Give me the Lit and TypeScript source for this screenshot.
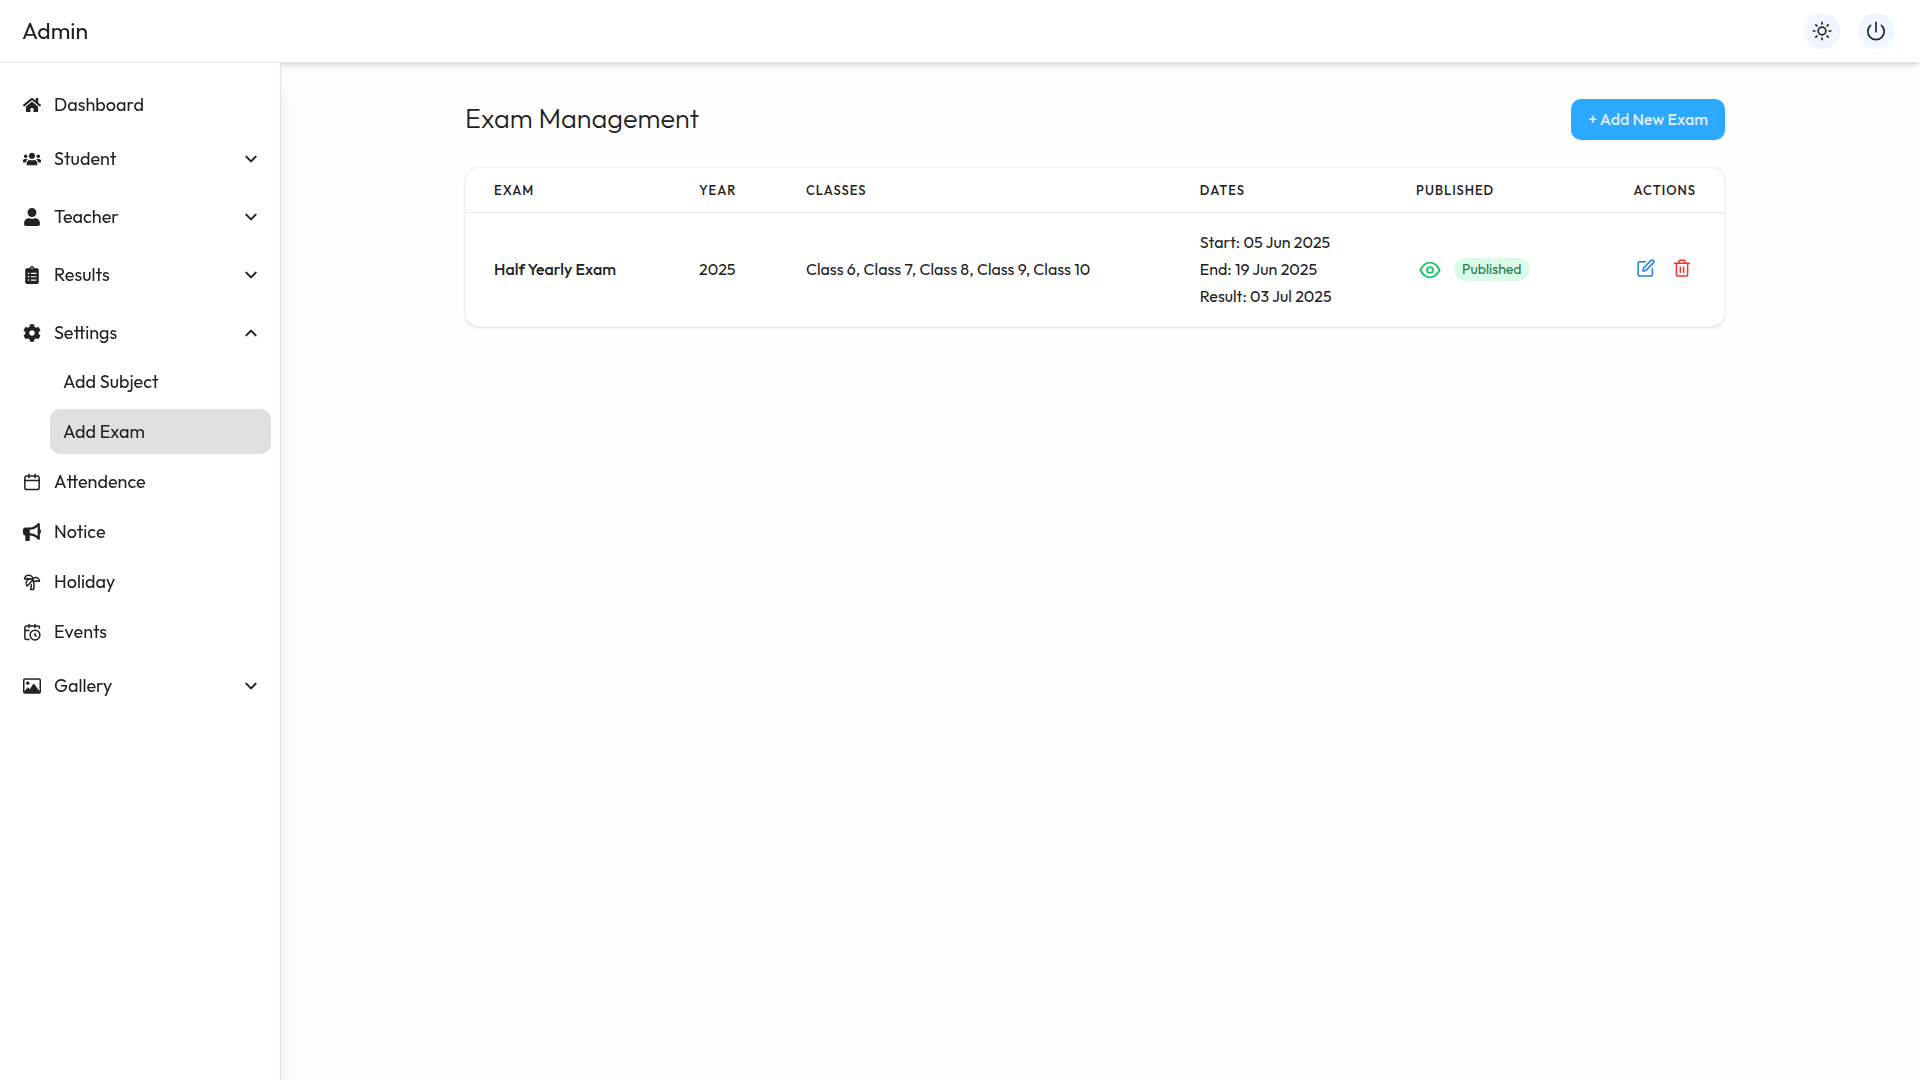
import { LitElement, html, css, svg, nothing } from "lit";
import { customElement, property, state } from "lit/decorators.js";

const icons: Record<string, unknown> = {
  home: svg`<svg viewBox="0 0 576 512" fill="currentColor"><path d="M280.37 148.26L96 300.11V464a16 16 0 0 0 16 16l112.06-.29a16 16 0 0 0 15.92-16V368a16 16 0 0 1 16-16h64a16 16 0 0 1 16 16v95.64a16 16 0 0 0 16 16.05L464 480a16 16 0 0 0 16-16V300L295.67 148.26a12.19 12.19 0 0 0-15.3 0zM571.6 251.47L488 182.56V44.05a12 12 0 0 0-12-12h-56a12 12 0 0 0-12 12v72.61L318.47 43a48 48 0 0 0-61 0L4.34 251.47a12 12 0 0 0-1.6 16.9l25.5 31A12 12 0 0 0 45.15 301l235.22-193.74a12.19 12.19 0 0 1 15.3 0L530.9 301a12 12 0 0 0 16.9-1.6l25.5-31a12 12 0 0 0-1.7-16.93z"/></svg>`,
  users: svg`<svg viewBox="0 0 640 512" fill="currentColor"><path d="M96 224c35.3 0 64-28.7 64-64s-28.7-64-64-64-64 28.7-64 64 28.7 64 64 64zm448 0c35.3 0 64-28.7 64-64s-28.7-64-64-64-64 28.7-64 64 28.7 64 64 64zm32 32h-64c-17.6 0-33.5 7.1-45.1 18.6 40.3 22.1 68.9 62 75.1 109.4h66c17.7 0 32-14.3 32-32v-32c0-35.3-28.7-64-64-64zm-256 0c61.9 0 112-50.1 112-112S381.9 32 320 32 208 82.1 208 144s50.1 112 112 112zm76.8 32h-8.3c-20.8 10-43.9 16-68.5 16s-47.6-6-68.5-16h-8.3C179.6 288 128 339.6 128 403.2V432c0 26.5 21.5 48 48 48h288c26.5 0 48-21.5 48-48v-28.8c0-63.6-51.6-115.2-115.2-115.2zm-223.7-13.4C161.5 263.1 145.6 256 128 256H64c-35.3 0-64 28.7-64 64v32c0 17.7 14.3 32 32 32h65.9c6.3-47.4 34.9-87.3 75.2-109.4z"/></svg>`,
  user: svg`<svg viewBox="0 0 448 512" fill="currentColor"><path d="M224 256c70.7 0 128-57.3 128-128S294.7 0 224 0 96 57.3 96 128s57.3 128 128 128zm89.6 32h-16.7c-22.2 10.2-46.9 16-72.9 16s-50.6-5.8-72.9-16h-16.7C60.2 288 0 348.2 0 422.4V464c0 26.5 21.5 48 48 48h352c26.5 0 48-21.5 48-48v-41.6c0-74.2-60.2-134.4-134.4-134.4z"/></svg>`,
  clipboard: svg`<svg viewBox="0 0 384 512" fill="currentColor"><path d="M336 64h-80c0-35.3-28.7-64-64-64s-64 28.7-64 64H48C21.5 64 0 85.5 0 112v352c0 26.5 21.5 48 48 48h288c26.5 0 48-21.5 48-48V112c0-26.5-21.5-48-48-48zM96 424c-13.3 0-24-10.7-24-24s10.7-24 24-24 24 10.7 24 24-10.7 24-24 24zm0-96c-13.3 0-24-10.7-24-24s10.7-24 24-24 24 10.7 24 24-10.7 24-24 24zm0-96c-13.3 0-24-10.7-24-24s10.7-24 24-24 24 10.7 24 24-10.7 24-24 24zm96-192c13.3 0 24 10.7 24 24s-10.7 24-24 24-24-10.7-24-24 10.7-24 24-24zm128 368c0 4.4-3.6 8-8 8H168c-4.4 0-8-3.6-8-8v-16c0-4.4 3.6-8 8-8h144c4.4 0 8 3.6 8 8v16zm0-96c0 4.4-3.6 8-8 8H168c-4.4 0-8-3.6-8-8v-16c0-4.4 3.6-8 8-8h144c4.4 0 8 3.6 8 8v16zm0-96c0 4.4-3.6 8-8 8H168c-4.4 0-8-3.6-8-8v-16c0-4.4 3.6-8 8-8h144c4.4 0 8 3.6 8 8v16z"/></svg>`,
  cog: svg`<svg viewBox="0 0 512 512" fill="currentColor"><path d="M487.4 315.7l-42.6-24.6c4.3-23.2 4.3-47 0-70.2l42.6-24.6c4.9-2.8 7.1-8.6 5.5-14-11.1-35.6-30-67.8-54.7-94.6-3.8-4.1-10-5.1-14.8-2.3L380.8 110c-17.9-15.4-38.5-27.3-60.8-35.1V25.8c0-5.6-3.9-10.5-9.4-11.7-36.7-8.2-74.3-7.8-109.2 0-5.5 1.2-9.4 6.1-9.4 11.7V75c-22.2 7.9-42.8 19.8-60.8 35.1L88.7 85.5c-4.9-2.8-11-1.9-14.8 2.3-24.7 26.7-43.6 58.9-54.7 94.6-1.7 5.4.6 11.2 5.5 14L67.3 221c-4.3 23.2-4.3 47 0 70.2l-42.6 24.6c-4.9 2.8-7.1 8.6-5.5 14 11.1 35.6 30 67.8 54.7 94.6 3.8 4.1 10 5.1 14.8 2.3l42.6-24.6c17.9 15.4 38.5 27.3 60.8 35.1v49.2c0 5.6 3.9 10.5 9.4 11.7 36.7 8.2 74.3 7.8 109.2 0 5.5-1.2 9.4-6.1 9.4-11.7v-49.2c22.2-7.9 42.8-19.8 60.8-35.1l42.6 24.6c4.9 2.8 11 1.9 14.8-2.3 24.7-26.7 43.6-58.9 54.7-94.6 1.5-5.5-.7-11.3-5.6-14.1zM256 336c-44.1 0-80-35.9-80-80s35.9-80 80-80 80 35.9 80 80-35.9 80-80 80z"/></svg>`,
  calendar: svg`<svg viewBox="0 0 24 24" fill="none" stroke="currentColor" stroke-width="2" stroke-linecap="round" stroke-linejoin="round"><rect x="2.5" y="4" width="19" height="18" rx="2.5"/><path d="M2.5 10h19M8 1.8v4.4M16 1.8v4.4"/></svg>`,
  horn: svg`<svg viewBox="0 0 512 512" fill="currentColor"><path d="M480 32c0-12.9-7.8-24.6-19.8-29.6s-25.7-2.2-34.9 6.9L381.7 53c-48 48-113.1 75-181 75H64c-35.3 0-64 28.7-64 64v96c0 35.3 28.7 64 64 64v128c0 17.7 14.3 32 32 32h64c17.7 0 32-14.3 32-32V352h8.7c67.9 0 133 27 181 75l43.6 43.6c9.2 9.2 22.9 11.9 34.9 6.9s19.8-16.6 19.8-29.6V300.4c18.6-8.8 32-32.5 32-60.4s-13.4-51.6-32-60.4V32zm-64 76.7v262.6C357.2 317.8 280.5 288 200.7 288H192v-96h8.7c79.8 0 156.5-29.8 215.3-83.3z"/></svg>`,
  palm: svg`<svg viewBox="0 0 24 24" fill="none" stroke="currentColor" stroke-width="2" stroke-linecap="round" stroke-linejoin="round"><path d="M13 8c0-2.76-2.46-5-5.5-5S2 5.24 2 8h2l1-1 1 1h4"/><path d="M13 7.14A5.82 5.82 0 0 1 16.5 6c3.04 0 5.5 2.24 5.5 5h-3l-1-1-1 1h-3"/><path d="M5.89 9.71c-2.15 2.15-2.3 5.47-.35 7.43l4.24-4.25.7-.7.71-.71 2.12-2.12c-1.95-1.96-5.27-1.8-7.42.35"/><path d="M11 15.5c.5 2.5-.17 4.5-1 6.5h4c2-5.5-.5-12-1-14"/></svg>`,
  events: svg`<svg viewBox="0 0 24 24" fill="none" stroke="currentColor" stroke-width="2" stroke-linecap="round" stroke-linejoin="round"><path d="M22 7V6a2 2 0 0 0-2-2H4.5a2 2 0 0 0-2 2v14a2 2 0 0 0 2 2H8M16 2v4M8 2v4M2.5 10H8M17.5 17.5 16 16.3V14"/><circle cx="16" cy="16" r="6.5"/></svg>`,
  image: svg`<svg viewBox="0 0 576 512" fill="currentColor"><path fill-rule="evenodd" d="M64 8h448a64 64 0 0 1 64 64v368a64 64 0 0 1-64 64H64a64 64 0 0 1-64-64V72A64 64 0 0 1 64 8zm0 48a16 16 0 0 0-16 16v348l90-112a20 20 0 0 1 31 0l44 54 110-160a24 24 0 0 1 40 0l165 222V72a16 16 0 0 0-16-16z"/><circle cx="152" cy="164" r="54"/></svg>`,
  down: svg`<svg viewBox="0 0 24 24" fill="none" stroke="currentColor" stroke-width="3" stroke-linecap="round" stroke-linejoin="round"><path d="m5 8.5 7 7 7-7"/></svg>`,
  up: svg`<svg viewBox="0 0 24 24" fill="none" stroke="currentColor" stroke-width="3" stroke-linecap="round" stroke-linejoin="round"><path d="m5 15.5 7-7 7 7"/></svg>`,
  sun: svg`<svg viewBox="0 0 24 24" fill="none" stroke="currentColor" stroke-width="2" stroke-linecap="round"><circle cx="12" cy="12" r="4.6"/><path d="M12 1.5v2M12 20.5v2M1.5 12h2M20.5 12h2M4.6 4.6 6 6M18 18l1.4 1.4M4.6 19.4 6 18M18 6l1.4-1.4"/></svg>`,
  power: svg`<svg viewBox="0 0 24 24" fill="none" stroke="currentColor" stroke-width="2" stroke-linecap="round"><path d="M12 1.5V13M5.5 5.3a9.8 9.8 0 1 0 13 0"/></svg>`,
  eye: svg`<svg viewBox="0 0 24 24" fill="none" stroke="currentColor" stroke-width="2" stroke-linejoin="round"><path d="M1.5 12C4 7 7.5 4 12 4s8 3 10.5 8c-2.5 5-6 8-10.5 8S4 17 1.5 12z"/><circle cx="12" cy="12" r="3.2"/></svg>`,
  edit: svg`<svg viewBox="0 0 24 24" fill="none" stroke="currentColor" stroke-width="2" stroke-linecap="round" stroke-linejoin="round"><path d="M11 3.5H3.5a2 2 0 0 0-2 2v15a2 2 0 0 0 2 2h15a2 2 0 0 0 2-2V13"/><path d="M18.6 2.2a2.2 2.2 0 0 1 3.2 3.2L12 15.2 8 16l.8-4z"/></svg>`,
  trash: svg`<svg viewBox="0 0 24 24" fill="none" stroke="currentColor" stroke-width="2" stroke-linecap="round" stroke-linejoin="round"><path d="M2 5.5h20M4.5 5.5V21A1.5 1.5 0 0 0 6 22.5h12a1.5 1.5 0 0 0 1.5-1.5V5.5M8 5.5v-3a1 1 0 0 1 1-1h6a1 1 0 0 1 1 1v3M9.8 10.5v7M14.2 10.5v7"/></svg>`,
};

interface NavItem {
  label: string;
  icon: string;
  children?: string[];
  group?: boolean;
}

const nav: NavItem[] = [
  { label: "Dashboard", icon: "home" },
  { label: "Student", icon: "users", group: true },
  { label: "Teacher", icon: "user", group: true },
  { label: "Results", icon: "clipboard", group: true },
  { label: "Settings", icon: "cog", group: true, children: ["Add Subject", "Add Exam"] },
  { label: "Attendence", icon: "calendar" },
  { label: "Notice", icon: "horn" },
  { label: "Holiday", icon: "palm" },
  { label: "Events", icon: "events" },
  { label: "Gallery", icon: "image", group: true },
];

const exams = [
  {
    name: "Half Yearly Exam",
    year: 2025,
    classes: ["Class 6", "Class 7", "Class 8", "Class 9", "Class 10"],
    start: "05 Jun 2025",
    end: "19 Jun 2025",
    result: "03 Jul 2025",
  },
];

@customElement("admin-header")
class AdminHeader extends LitElement {
  static styles = css`
    :host { display: block; position: relative; z-index: 2; }
    .bar {
      display: flex; align-items: center; justify-content: space-between;
      height: 62px; padding: 0 26px 0 22px; background: #fff;
      border-bottom: 1px solid #dfe5ec;
      box-shadow: 0 4px 6px -1px rgba(0, 0, 0, 0.1), 0 2px 4px -2px rgba(0, 0, 0, 0.1);
    }
    .brand { font-size: 23px; line-height: 32px; will-change: transform; }
    .tools { display: flex; gap: 18px; }
    .tool {
      display: grid; place-items: center; width: 36px; height: 36px; padding: 0;
      border: 0; border-radius: 50%; background: #eff6ff; color: #222; cursor: pointer;
    }
    svg { display: block; width: 20px; height: 20px; }
  `;
  render() {
    return html`<header class="bar">
      <div class="brand">Admin</div>
      <div class="tools">
        <button class="tool" aria-label="Toggle theme">${icons.sun}</button>
        <button class="tool" aria-label="Log out">${icons.power}</button>
      </div>
    </header>`;
  }
}

@customElement("side-nav")
class SideNav extends LitElement {
  @property() active = "Add Exam";
  @state() private open = "Settings";

  static styles = css`
    :host {
      display: block; background: #fff; border-right: 1px solid #dfe3ee;
      box-shadow: 0 20px 25px -5px rgba(0, 0, 0, 0.1), 0 8px 10px -6px rgba(0, 0, 0, 0.1);
      clip-path: inset(0 -40px 0 0); position: relative; z-index: 3;
    }
    nav { display: flex; flex-direction: column; gap: 5px; padding: 19px 9px; will-change: transform; }
    .row {
      display: flex; align-items: center; gap: 13px; box-sizing: border-box; width: 100%;
      min-height: 45px; padding: 0 14px; border: 0; border-radius: 10px; background: none;
      color: inherit; font: inherit; text-align: left; text-decoration: none; cursor: pointer;
    }
    .group { min-height: 53px; padding-right: 12px; }
    .label { flex: 1; }
    .icon, .icon svg { display: block; width: 18px; height: 18px; }
    .chevron svg { display: block; width: 16px; height: 16px; }
    .sub { display: flex; flex-direction: column; gap: 5px; padding-left: 41px; }
    .sub .row { padding: 0 13px; }
    .active { background: #e0e0e0; }
  `;

  private item(item: NavItem) {
    const expanded = this.open === item.label;
    if (!item.group) {
      return html`<a class="row" href="#"><span class="icon">${icons[item.icon]}</span><span class="label">${item.label}</span></a>`;
    }
    return html`<div>
      <button class="row group" aria-expanded=${expanded} @click=${() => (this.open = expanded ? "" : item.label)}>
        <span class="icon">${icons[item.icon]}</span><span class="label">${item.label}</span>
        <span class="chevron">${expanded ? icons.up : icons.down}</span>
      </button>
      ${expanded && item.children
        ? html`<div class="sub">
            ${item.children.map((c) => html`<a class="row ${c === this.active ? "active" : ""}" href="#">${c}</a>`)}
          </div>`
        : nothing}
    </div>`;
  }

  render() {
    return html`<nav>${nav.map((n) => this.item(n))}</nav>`;
  }
}

@customElement("exam-page")
class ExamPage extends LitElement {
  static styles = css`
    :host { display: block; }
    .page { max-width: 1260px; margin: 0 auto; padding: 36px 24px; }
    .head { display: flex; align-items: flex-start; justify-content: space-between; margin-bottom: 27px; }
    h1 { margin: 0; font-size: 27px; line-height: 38px; font-weight: 300; }
    .add {
      height: 41px; padding: 0 17px; border: 0; border-radius: 10px; background: #2ba8ff;
      color: #e1ebfb; font: inherit; font-size: 16px; font-weight: 500; cursor: pointer;
    }
    .card {
      border: 1px solid #f3f3f3; border-radius: 14px; background: #fff; overflow: hidden;
      box-shadow: 0 1px 3px rgba(0, 0, 0, 0.1), 0 1px 2px -1px rgba(0, 0, 0, 0.1);
    }
    table { width: 100%; border-collapse: separate; border-spacing: 0; table-layout: fixed; font-size: 16px; line-height: 27px; }
    th, td { box-sizing: border-box; }
    th {
      height: 45px; padding: 0 28px; border-bottom: 1px solid #e4e6e7;
      font-size: 13px; line-height: 20px; font-weight: 500; text-align: left; letter-spacing: 1px; text-transform: uppercase;
    }
    td { padding: 16px 28px; }
    .c-exam { width: 16.3%; }
    .c-year { width: 8.5%; }
    .c-classes { width: 31.3%; }
    .c-dates { width: 17.2%; }
    .c-published { width: 15%; }
    .name { font-weight: 500; }
    .end { text-align: right; }
    .status { display: flex; align-items: center; gap: 10px; }
    .actions { display: inline-flex; align-items: center; gap: 8px; }
    .icon { display: grid; place-items: center; width: 28px; height: 28px; padding: 0; border: 0; border-radius: 50%; background: none; cursor: pointer; }
    .icon svg { display: block; width: 18px; height: 18px; }
    .eye { color: #17c964; }
    .eye svg { width: 22px; height: 22px; }
    .edit { color: #1b7fdc; }
    .delete { color: #f5302b; box-shadow: 0 1px 2px rgba(0, 0, 0, 0.06); }
    .badge { padding: 0 8px; border-radius: 12px; background: #dcfce7; color: #1d7a55; font-size: 14px; line-height: 23px; }
  `;

  render() {
    return html`<main class="page">
      <div class="head">
        <h1>Exam Management</h1>
        <button class="add">+ Add New Exam</button>
      </div>
      <div class="card">
        <table>
          <thead>
            <tr>
              <th class="c-exam">Exam</th>
              <th class="c-year">Year</th>
              <th class="c-classes">Classes</th>
              <th class="c-dates">Dates</th>
              <th class="c-published">Published</th>
              <th class="end">Actions</th>
            </tr>
          </thead>
          <tbody>
            ${exams.map(
              (e) => html`<tr>
                <td class="name">${e.name}</td>
                <td>${e.year}</td>
                <td>${e.classes.join(", ")}</td>
                <td>
                  <div>Start: ${e.start}</div>
                  <div>End: ${e.end}</div>
                  <div>Result: ${e.result}</div>
                </td>
                <td>
                  <div class="status">
                    <button class="icon eye" aria-label="Unpublish">${icons.eye}</button>
                    <span class="badge">Published</span>
                  </div>
                </td>
                <td class="end">
                  <div class="actions">
                    <button class="icon edit" aria-label="Edit exam">${icons.edit}</button>
                    <button class="icon delete" aria-label="Delete exam">${icons.trash}</button>
                  </div>
                </td>
              </tr>`
            )}
          </tbody>
        </table>
      </div>
    </main>`;
  }
}

@customElement("app-root")
class AppRoot extends LitElement {
  static styles = css`
    :host {
      display: flex; flex-direction: column; min-height: 100vh; background: #fefefe; color: #222;
      font-family: Outfit, Lato, "Liberation Sans", sans-serif; font-size: 18px; line-height: 27px;
    }
    .body { display: grid; grid-template-columns: 281px 1fr; flex: 1; padding-right: 11px; }
  `;
  render() {
    return html`<admin-header></admin-header>
      <div class="body"><side-nav></side-nav><exam-page></exam-page></div>`;
  }
}
